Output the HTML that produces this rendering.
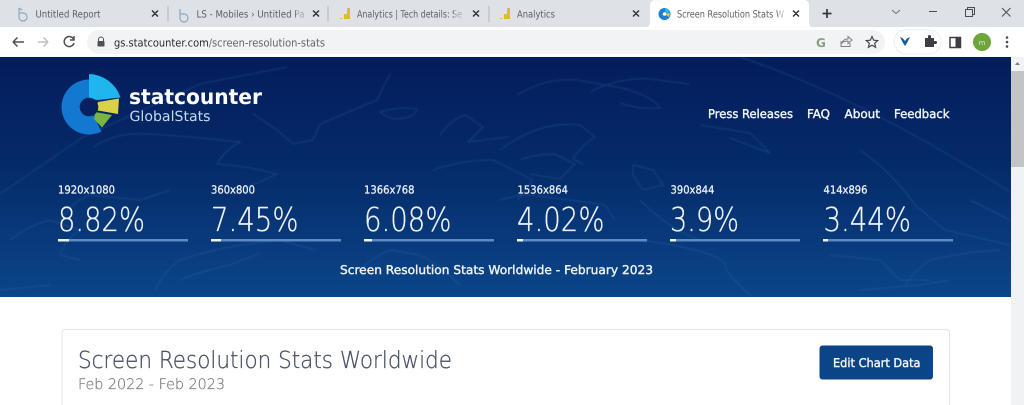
<!DOCTYPE html>
<html><head><meta charset="utf-8"><style>
html,body{margin:0;padding:0;background:#fff;width:1024px;height:405px;overflow:hidden}
svg{display:block;filter:blur(.35px)}
text{font-family:"DejaVu Sans","Liberation Sans",sans-serif;text-rendering:geometricPrecision}
.t{font-size:10px;fill:#5a6066}
.x{stroke:#33373b;stroke-width:1.5;fill:none}
.i{fill:none;stroke:#555a60;stroke-width:1.3}
.m{fill:none;stroke:#3b7cc4;stroke-width:1;opacity:.3}
.l{font-size:11px;fill:#edf2f8;stroke:#edf2f8;stroke-width:.3}
.p{font-size:33px;fill:#eef3f9;font-weight:200;stroke:#eef3f9;stroke-width:.3}
.n{font-size:12px;fill:#f2f6fa;stroke:#f2f6fa;stroke-width:.4}
</style></head><body>
<svg width="1024" height="405" viewBox="0 0 1024 405" xmlns="http://www.w3.org/2000/svg">
<defs><linearGradient id="g" x1="0" y1="0" x2="0" y2="1"><stop offset="0" stop-color="#041d5c"/><stop offset=".45" stop-color="#052a69"/><stop offset="1" stop-color="#0b4688"/></linearGradient>
<filter id="b" x="-5%" y="-5%" width="110%" height="110%"><feGaussianBlur stdDeviation=".8"/></filter></defs>
<!-- tab strip -->
<rect width="1024" height="27" fill="#dee1e5"/>
<rect y="27" width="1024" height="30" fill="#fff"/>
<path d="M646 27q4 0 4-5V6q0-6 6-6h148q5 0 5 6v16q0 5 4 5z" fill="#fff"/>
<path d="M168 6v16M328 6v16M489 6v16" stroke="#b4b8bd"/>
<!-- tab icons -->
<path d="M19 8v9a4 4 0 1 0 4-4h-4M19 8l3 2" fill="none" stroke="#8fa6c4" stroke-width="1.2"/>
<path d="M180 9v9a4 4 0 1 0 4-4h-4" fill="none" stroke="#8fa6c4" stroke-width="1.2"/>
<path d="M340 19h2v-1h-2zM344 19v-5h3v5zM347 19V8h3v11z" fill="#e8b92e"/>
<path d="M500 19h2v-1h-2zM504 19v-5h3v5zM507 19V8h3v11z" fill="#e8b92e"/>
<circle cx="664.500" cy="14" r="6" fill="#1c7fd0"/><path d="M665 8a6 6 0 0 1 5 4l-5 2z" fill="#29b6e8"/><path d="M665 14l5-1-1 4z" fill="#e0cc45"/><circle cx="664.500" cy="14" r="1.800" fill="#fff"/>
<!-- tab text -->
<text class="t" x="35.500" y="17.500" textLength="65" lengthAdjust="spacingAndGlyphs">Untitled Report</text>
<text class="t" x="196.500" y="17.500" textLength="108" lengthAdjust="spacingAndGlyphs">LS - Mobiles  › Untitled Pa</text>
<text class="t" x="357" y="17.500" textLength="105" lengthAdjust="spacingAndGlyphs">Analytics | Tech details: Se</text>
<text class="t" x="517" y="17.500" textLength="38" lengthAdjust="spacingAndGlyphs">Analytics</text>
<text class="t" x="677" y="17.500" textLength="107" lengthAdjust="spacingAndGlyphs">Screen Resolution Stats W</text>
<rect x="296" y="8" width="10" height="12" fill="#dee1e5" opacity=".6"/>
<rect x="454" y="8" width="10" height="12" fill="#dee1e5" opacity=".6"/>
<rect x="778" y="8" width="8" height="12" fill="#fff" opacity=".6"/>
<!-- close x -->
<path class="x" d="M152 10.500l6 6M158 10.500l-6 6M313 10.500l6 6M319 10.500l-6 6M473 10.500l6 6M479 10.500l-6 6M633 10.500l6 6M639 10.500l-6 6M793 10.500l6 6M799 10.500l-6 6"/>
<path d="M827 9v9M822.500 13.500h9" stroke="#33373b" stroke-width="1.700" fill="none"/>
<!-- window controls -->
<path d="M892 10l4 3.500 4-3.500" fill="none" stroke="#70757a"/>
<path d="M929 11.500h8" stroke="#4a4e52" stroke-width="1"/>
<path d="M965.500 9.500h7v7h-7zM967.500 9.500v-2h7v7h-2" fill="none" stroke="#4a4e52"/>
<path d="M1002 8l8.500 8.500M1010.500 8l-8.500 8.500" stroke="#4a4e52" fill="none"/>
<!-- toolbar -->
<rect x="87" y="30" width="798" height="24" rx="12" fill="#f1f3f4"/>
<path d="M13 42h11M13 42l4.500-4.500M13 42l4.500 4.500" class="i" style="stroke:#4b5055;stroke-width:1.500"/>
<path d="M38 42h10M48 42l-4.500-4.500M48 42l-4.500 4.500" class="i" style="stroke:#bcc0c4;stroke-width:1.500"/>
<path d="M73.500 39a5 5 0 1 0 .5 4M74 36v4h-4" class="i" style="stroke:#4b5055;stroke-width:1.500"/>
<path d="M98.500 41v-1.500a2.500 2.500 0 0 1 5 0V41" fill="none" stroke="#4d5156" stroke-width="1"/><rect x="97.500" y="41" width="7" height="5.500" rx=".8" fill="#4d5156"/>
<text x="114" y="46.500" font-size="11" fill="#5f6368" textLength="211" lengthAdjust="spacingAndGlyphs"><tspan fill="#26292c">gs.statcounter.com</tspan>/screen-resolution-stats</text>
<text x="816" y="47" font-size="12" font-weight="bold" fill="#8a9f80">G</text>
<path d="M841 41v5.500h9V43M842 43q1-4 6-4v-2.500l4 3.500-4 3.500V41q-4 0-6 2z" class="i" style="stroke:#7b8085;stroke-width:1"/>
<path d="M872 36.500l1.700 3.700 4 .4-3 2.700.9 4-3.600-2.100-3.600 2.100.9-4-3-2.700 4-.4z" fill="none" stroke="#45494e" stroke-width="1.200"/>
<rect x="894" y="30" width="47" height="24" rx="12" fill="#fff" stroke="#eceef0"/>
<path d="M900 37l3 1.500 2 2.500 2-2.500 3-1.500-2.500 5-2.500 4-2.500-4z" fill="#155a9c"/>
<path d="M925 38h3v-1.500a1.500 1.500 0 0 1 3 0V38h3v3h1.500a1.500 1.500 0 0 1 0 3H934v3h-9z" fill="#3c4045"/>
<path d="M950 37.500h10.500v10H950z" fill="none" stroke="#3c4045" stroke-width="1.500"/><rect x="955.500" y="37.500" width="5" height="10" fill="#3c4045"/>
<circle cx="982" cy="42" r="9" fill="#6ea63c"/><text x="982" y="45" font-size="7" fill="#d7ecc0" text-anchor="middle">m</text>
<circle cx="1007" cy="37.500" r="1.300" fill="#45494e"/><circle cx="1007" cy="42" r="1.300" fill="#45494e"/><circle cx="1007" cy="46.500" r="1.300" fill="#45494e"/>
<!-- banner -->
<rect y="57" width="1011" height="240" fill="url(#g)"/>
<!-- map lines -->
<g filter="url(#b)">
<path class="m" d="M0 194L83 137 200 84 287 67M253 114l24 16 16 14 20-4 7-16 57-24 13-26M380 112q20-6 37-3-2 7-12 9-15 3-25-6z"/>
<path class="m" d="M93 147q20-12 40-13t107 8q-15 8-23 22 30 2 60 10-20 10-43 17M440 135q10-15 25-20l18 12q-8 8-15 15l40-5M433 170q30-10 60-10l40 20q-8 10-15 20M60 220q15-20 30-25l50 5 30-10M10 240q20-15 40-20l30 10q-15 10-20 25l20 5"/>
<path class="m" d="M155 290q10-20 25-30 30-10 60-15l40-5 35 10M180 280q25-10 50-15l30-12M360 270q15-15 30-20l30 5q20 10 40 30M0 290l50-5"/>
<path class="m" d="M740 57q120 40 270 135M517 95q30-18 60-15l45 8q30 8 38 20-20 2-40-5M590 92q30-15 60-13l40 5M700 125l50 8 20 20-40-15M860 150q15 10 30 25t25 30l30 25 65 15M520 160q15-6 35-6l20 10-15 15-30-5M500 150q40-30 80-25l15 12q-15 10-22 22l10 5"/>
<path class="m" d="M633 165l20 5 10 15-20 5-10-15zM500 200q15-5 30-5l40 5 35 5 10 15M640 200q15 15 30 25t30 15M635 240q30 2 60 10t30 15 25 30M830 255l50 5 20 20h30M1000 250q-35 2-70 10-15 10-25 25M860 290l60-5 30-5M970 200l40 20"/>
</g>
<!-- logo -->
<path d="M89 107L101.500 131.500A27.500 27.500 0 1 1 89 79.500z" fill="#1378d0"/>
<path d="M89 74A34 34 0 0 1 120.500 97.500L98 100 89 99z" fill="#1fb5ee"/>
<path d="M98 102l21-3.500-1 15.500-23-4z" fill="#d9d14a"/>
<path d="M95 112l17 3-10 12.500-8-8.500z" fill="#78b541"/>
<circle cx="89" cy="107" r="9.300" fill="#05215f"/>
<text x="129" y="104" font-size="21" font-weight="bold" fill="#fff" textLength="133" lengthAdjust="spacingAndGlyphs">statcounter</text>
<text x="129.500" y="121" font-size="14" fill="#c6daee" textLength="81" lengthAdjust="spacingAndGlyphs">GlobalStats</text>
<!-- nav -->
<text class="n" x="708" y="118" textLength="85" lengthAdjust="spacingAndGlyphs">Press Releases</text>
<text class="n" x="807" y="118" textLength="23" lengthAdjust="spacingAndGlyphs">FAQ</text>
<text class="n" x="844.500" y="118" textLength="35.500" lengthAdjust="spacingAndGlyphs">About</text>
<text class="n" x="894" y="118" textLength="55.500" lengthAdjust="spacingAndGlyphs">Feedback</text>
<!-- stats -->
<text class="l" x="58" y="193.500" textLength="57" lengthAdjust="spacingAndGlyphs">1920x1080</text>
<text class="p" x="58" y="231" textLength="87" lengthAdjust="spacingAndGlyphs">8.82%</text>
<rect x="58" y="239" width="130" height="2.500" fill="#5b8ac4"/><rect x="58" y="239" width="11" height="2.500" fill="#eef3f9"/>
<text class="l" x="211" y="193.500" textLength="44" lengthAdjust="spacingAndGlyphs">360x800</text>
<text class="p" x="211" y="231" textLength="87.500" lengthAdjust="spacingAndGlyphs">7.45%</text>
<rect x="211" y="239" width="130" height="2.500" fill="#5b8ac4"/><rect x="211" y="239" width="10" height="2.500" fill="#eef3f9"/>
<text class="l" x="364" y="193.500" textLength="50.500" lengthAdjust="spacingAndGlyphs">1366x768</text>
<text class="p" x="364" y="231" textLength="87.500" lengthAdjust="spacingAndGlyphs">6.08%</text>
<rect x="364" y="239" width="130" height="2.500" fill="#5b8ac4"/><rect x="364" y="239" width="8" height="2.500" fill="#eef3f9"/>
<text class="l" x="517.500" y="193.500" textLength="50.500" lengthAdjust="spacingAndGlyphs">1536x864</text>
<text class="p" x="517" y="231" textLength="87.500" lengthAdjust="spacingAndGlyphs">4.02%</text>
<rect x="517" y="239" width="130" height="2.500" fill="#5b8ac4"/><rect x="517" y="239" width="6" height="2.500" fill="#eef3f9"/>
<text class="l" x="670.500" y="193.500" textLength="44" lengthAdjust="spacingAndGlyphs">390x844</text>
<text class="p" x="670" y="231" textLength="69" lengthAdjust="spacingAndGlyphs">3.9%</text>
<rect x="670" y="239" width="130" height="2.500" fill="#5b8ac4"/><rect x="670" y="239" width="6" height="2.500" fill="#eef3f9"/>
<text class="l" x="823.500" y="193.500" textLength="44" lengthAdjust="spacingAndGlyphs">414x896</text>
<text class="p" x="823.500" y="231" textLength="87.500" lengthAdjust="spacingAndGlyphs">3.44%</text>
<rect x="823" y="239" width="130" height="2.500" fill="#5b8ac4"/><rect x="823" y="239" width="5" height="2.500" fill="#eef3f9"/>
<text x="340" y="274" font-size="12" fill="#eef3f9" stroke="#eef3f9" stroke-width=".4" textLength="313" lengthAdjust="spacingAndGlyphs">Screen Resolution Stats Worldwide - February 2023</text>
<!-- scrollbar -->
<rect x="1011" y="57" width="13" height="348" fill="#f1f2f3"/>
<path d="M1015 65l2.500-3 2.500 3z" fill="#7c7f82"/>
<rect x="1011" y="71" width="13" height="96" fill="#c2c4c6"/>
<!-- card -->
<path d="M62 405V333q0-3.500 3.500-3.500H946q3.500 0 3.500 3.500v72" fill="#fff" stroke="#e2e4e7"/>
<text x="78" y="368" font-size="23.500" font-weight="200" fill="#4a5366" stroke="#4a5366" stroke-width=".3" textLength="374" lengthAdjust="spacingAndGlyphs">Screen Resolution Stats Worldwide</text>
<text x="78" y="389" font-size="14.500" font-weight="200" fill="#7c8087" stroke="#7c8087" stroke-width=".25" textLength="147" lengthAdjust="spacingAndGlyphs">Feb 2022 - Feb 2023</text>
<rect x="819.500" y="345.500" width="113.500" height="34" rx="3" fill="#0b4487"/>
<text x="833" y="367" font-size="12" fill="#f4f7fb" stroke="#f4f7fb" stroke-width=".4" textLength="87.500" lengthAdjust="spacingAndGlyphs">Edit Chart Data</text>
</svg>
</body></html>
